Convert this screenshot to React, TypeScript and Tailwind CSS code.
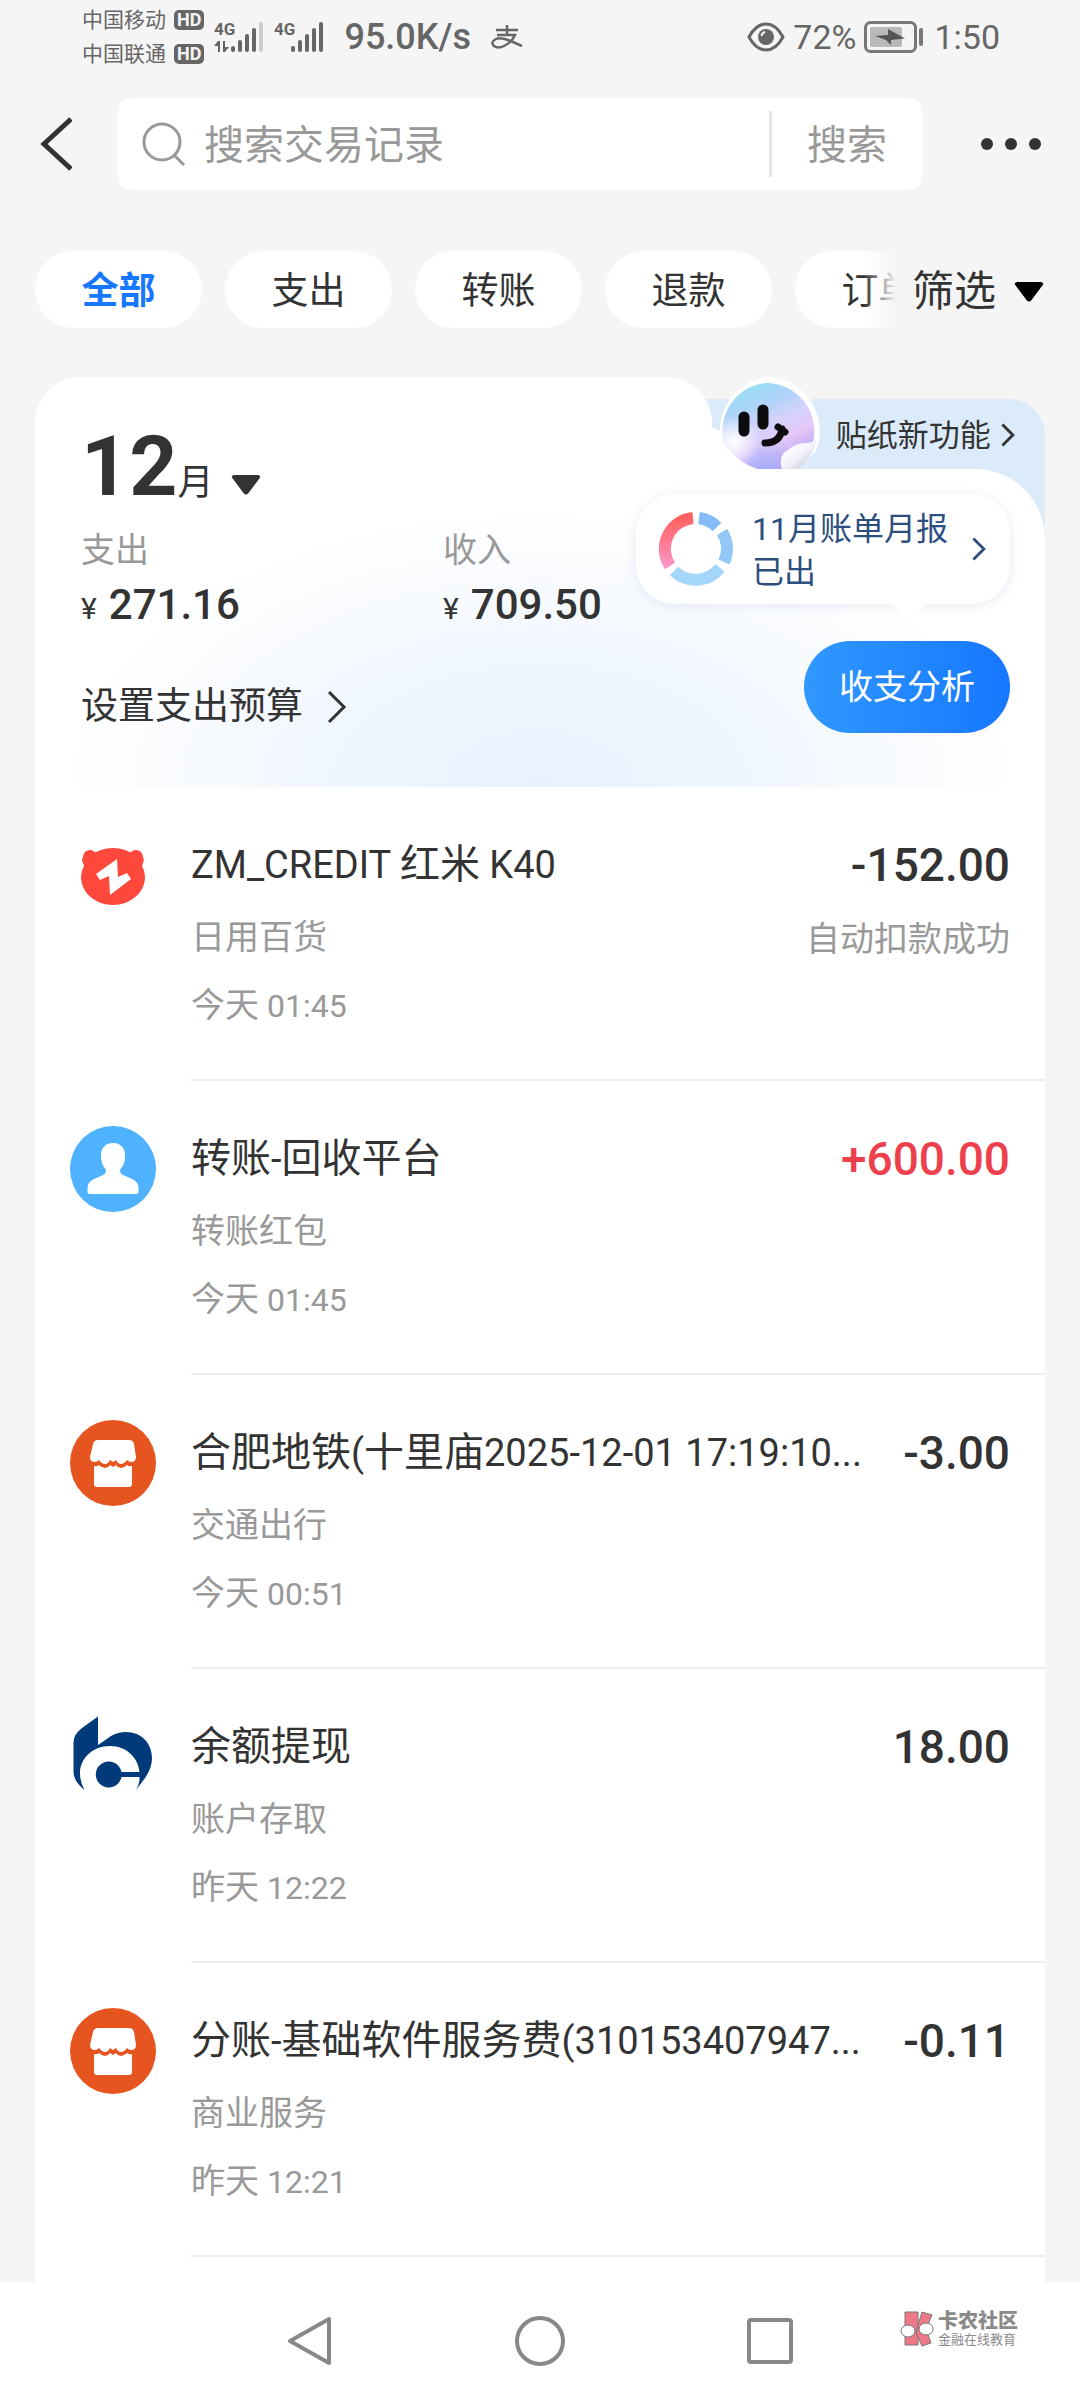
import { useState } from "react";
import type { ReactNode } from "react";

interface Bill {
  id: number;
  icon: ReactNode;
  title: string;
  category: string;
  time: string;
  amount: string;
  income?: boolean;
  note?: string;
}

function CreditIcon() {
  return (
    <svg viewBox="0 0 86 86" className="size-[86px] shrink-0">
      <g fill="#ff483c">
        <circle cx="20" cy="25" r="7" />
        <circle cx="66" cy="25" r="7" />
        <path d="M12 28Q13 22 20 24Q30 16 43 16Q56 16 66 24Q73 22 74 28L72 34Q75 39 75 45C75 61 60 73 43 73C26 73 11 61 11 45Q11 39 14 34Z" />
      </g>
      <path
        d="M26 42L47 27L48 45L57 41L61 47L40 63L39 44L30 48Z"
        fill="#fff"
      />
    </svg>
  );
}

function PersonIcon() {
  return (
    <svg viewBox="0 0 86 86" className="size-[86px] shrink-0">
      <circle cx="43" cy="43" r="43" fill="#4eb2ff" />
      <path
        d="M43 17C50 17 55 21.500 55 29C55 37 53 40 50.500 43Q49 47 53 49L62 53Q68.500 56 68.500 62V66Q68.500 68 66 68H20Q17.500 68 17.500 66V62Q17.500 56 24 53L33 49Q37 47 35.500 43C33 40 31 37 31 29C31 21.500 36 17 43 17Z"
        fill="#fff"
      />
    </svg>
  );
}

function ShopIcon() {
  return (
    <svg viewBox="0 0 86 86" className="size-[86px] shrink-0">
      <circle cx="43" cy="43" r="43" fill="#e6551f" />
      <path
        d="M28 20H59Q63 20 64 24L66 37Q66 42 61 42Q59 42 57 40Q54 44 51 44Q48 44 46 40L43 42L40 40Q38 44 35 44Q32 44 29 40Q27 42 25 42Q20 42 20 37L23 24Q24 20 28 20Z"
        fill="#fff"
      />
      <path
        d="M24 46Q27 47 29 45Q32 48 35 48Q38 48 40 45L43 47L46 45Q48 48 51 48Q54 48 57 45Q59 47 62 46V64Q62 67 59 67H27Q24 67 24 64Z"
        fill="#fff"
      />
    </svg>
  );
}

function BankIcon() {
  return (
    <svg viewBox="0 0 86 86" className="size-[86px] shrink-0">
      <path
        d="M28 2.500V31L41 22Q48 18 56 18C72 18 82 30 82 44Q82 54 75 64L66 76Q70 69 69.500 63H51.500A13 13 0 1 1 51.500 58H69.500C68 43 56 32 40 32C22 32 10 45 10 59Q10 68 14.500 76Q3.500 67 3.500 58V28Q4 20 12 14Z"
        fill="#003a7a"
      />
    </svg>
  );
}

const bills: Bill[] = [
  {
    id: 1,
    icon: <CreditIcon />,
    title: "ZM_CREDIT 红米 K40",
    category: "日用百货",
    time: "今天 01:45",
    amount: "-152.00",
    note: "自动扣款成功",
  },
  {
    id: 2,
    icon: <PersonIcon />,
    title: "转账-回收平台",
    category: "转账红包",
    time: "今天 01:45",
    amount: "+600.00",
    income: true,
  },
  {
    id: 3,
    icon: <ShopIcon />,
    title: "合肥地铁(十里庙2025-12-01 17:19:10...",
    category: "交通出行",
    time: "今天 00:51",
    amount: "-3.00",
  },
  {
    id: 4,
    icon: <BankIcon />,
    title: "余额提现",
    category: "账户存取",
    time: "昨天 12:22",
    amount: "18.00",
  },
  {
    id: 5,
    icon: <ShopIcon />,
    title: "分账-基础软件服务费(310153407947...",
    category: "商业服务",
    time: "昨天 12:21",
    amount: "-0.11",
  },
];

const tabs = ["全部", "支出", "转账", "退款", "订单"];

// Latin runs are set a little smaller than the Chinese around them
function Mixed({ text, latin }: { text: string; latin: string }) {
  return (
    <>
      {text.split(/([\x20-\x7e]+)/).map((part, i) =>
        i % 2 ? (
          <span key={i} className={latin}>
            {part}
          </span>
        ) : (
          part
        ),
      )}
    </>
  );
}

function Chevron({ className }: { className: string }) {
  return (
    <svg
      viewBox="0 0 20 34"
      className={className}
      fill="none"
      stroke="currentColor"
    >
      <path d="M2 2L17 17L2 32" />
    </svg>
  );
}

function Triangle({ className }: { className?: string }) {
  return (
    <svg viewBox="0 0 30 20" className={`h-5 w-[30px] ${className ?? ""}`}>
      <path
        d="M3 0H27Q31 1 28 4L17.500 18Q15 21 12.500 18L2 4Q-1 1 3 0Z"
        fill="currentColor"
      />
    </svg>
  );
}

function Carrier({ name }: { name: string }) {
  return (
    <div className="flex items-center gap-2">
      <span className="text-[21px] leading-[34px]">{name}</span>
      <span className="rounded-[5px] bg-[#666] px-[3px] text-[18px] leading-[20px] font-bold text-[#f5f5f5]">
        HD
      </span>
    </div>
  );
}

function Signal({ data, full }: { data?: boolean; full?: boolean }) {
  return (
    <svg viewBox="0 0 52 34" className="h-[34px] w-[52px]" fill="#666">
      <text x="0" y="15" fontSize="17" fontWeight="700">
        4G
      </text>
      {data && (
        <>
          <path d="M0 26L4 21H6V32H4V26Z" />
          <path d="M9 21H11V27H15L11 32H9Z" />
        </>
      )}
      <rect x="17" y="26" width="4" height="6" rx="2" />
      <rect x="24" y="20" width="4" height="12" rx="2" />
      <rect x="31" y="14" width="4" height="18" rx="2" />
      <rect x="38" y="8" width="4" height="24" rx="2" />
      <rect
        x="45"
        y="2"
        width="4"
        height="30"
        rx="2"
        fill={full ? "#666" : "#ccc"}
      />
    </svg>
  );
}

function StatusBar() {
  return (
    <div className="flex h-[74px] items-center pr-20 pl-[82px] text-[#666]">
      <div>
        <Carrier name="中国移动" />
        <Carrier name="中国联通" />
      </div>
      <div className="ml-2.5 flex items-center gap-2">
        <Signal data />
        <Signal full />
      </div>
      <span className="ml-[18px] text-[36px] leading-[40px] font-medium">
        95.0K/s
      </span>
      <svg
        viewBox="0 0 32 24"
        className="ml-5 h-6 w-8"
        fill="none"
        stroke="#666"
        strokeWidth="2.500"
      >
        <path d="M5 5H27M16 0V10M6 10H24Q21 17 13 21Q7 24 3 21Q-1 17 5 14Q9 12 17 15L31 21" />
      </svg>
      <div className="ml-auto flex items-center">
        <svg viewBox="0 0 38 30" className="h-[30px] w-[38px]">
          <path
            d="M2 15Q9 2 19 2T36 15Q29 28 19 28T2 15Z"
            fill="none"
            stroke="#666"
            strokeWidth="3"
          />
          <circle cx="19" cy="15" r="8" fill="#666" />
          <path
            d="M14.500 14Q15 10.500 18 10"
            fill="none"
            stroke="#f5f5f5"
            strokeWidth="2"
          />
        </svg>
        <span className="ml-2 text-[34px] leading-[40px]">72%</span>
        <svg viewBox="0 0 60 34" className="ml-2 h-[34px] w-[60px]">
          <rect
            x="1.500"
            y="2.500"
            width="50"
            height="29"
            rx="5"
            fill="none"
            stroke="#777"
            strokeWidth="3"
          />
          <rect x="6" y="7" width="32" height="20" rx="2" fill="#b9b9b9" />
          <path d="M11 16L24 15V9L41 18.500L27 20V25L22 20Z" fill="#555" />
          <rect x="55" y="8" width="4" height="18" rx="2" fill="#777" />
        </svg>
        <span className="ml-2.5 text-[34px] leading-[40px]">1:50</span>
      </div>
    </div>
  );
}

function SearchHeader() {
  const [keyword, setKeyword] = useState("");

  return (
    <header className="mt-6 flex h-[92px] items-center pr-9 pl-10">
      <button type="button" aria-label="返回">
        <svg
          viewBox="0 0 32 54"
          className="h-[54px] w-8"
          fill="none"
          stroke="#333"
          strokeWidth="5"
        >
          <path d="M31 2L4 27L31 52" />
        </svg>
      </button>
      <form
        className="ml-[46px] flex h-full flex-1 items-center rounded-[14px] bg-white pl-6"
        onSubmit={(e) => e.preventDefault()}
      >
        <svg
          viewBox="0 0 44 44"
          className="size-11 shrink-0"
          fill="none"
          stroke="#999"
          strokeWidth="3"
        >
          <circle cx="20" cy="20" r="18" />
          <path d="M32 33L42 43" />
        </svg>
        <input
          type="text"
          aria-label="搜索交易记录"
          placeholder="搜索交易记录"
          value={keyword}
          onChange={(e) => setKeyword(e.target.value)}
          className="ml-[18px] min-w-0 flex-1 pt-1 text-[40px] leading-[60px] outline-0 placeholder:text-[#999]"
        />
        <button
          type="submit"
          className="h-[66px] border-l-3 border-[#e5e5e5] px-[35px] pt-1 text-[40px] leading-[60px] text-[#999]"
        >
          搜索
        </button>
      </form>
      <button type="button" aria-label="更多" className="ml-14">
        <svg viewBox="0 0 66 14" className="h-[14px] w-[66px]" fill="#333">
          <circle cx="9" cy="7" r="6" />
          <circle cx="33" cy="7" r="6" />
          <circle cx="57" cy="7" r="6" />
        </svg>
      </button>
    </header>
  );
}

function FilterTabs() {
  const [active, setActive] = useState("全部");

  return (
    <nav className="mt-[61px] flex items-center pr-9 pl-[35px]">
      <div className="relative min-w-0 flex-1 overflow-hidden">
        <div className="flex gap-[23px]">
          {tabs.map((tab) => (
            <button
              key={tab}
              type="button"
              onClick={() => setActive(tab)}
              className={`h-[77px] w-[167px] shrink-0 rounded-full bg-white pt-1 text-[37px] leading-[56px] ${
                tab === active ? "font-bold text-[#1677ff]" : "text-[#333]"
              }`}
            >
              {tab}
            </button>
          ))}
        </div>
        <div className="absolute inset-y-0 right-0 w-8 bg-linear-to-r from-transparent to-[#f5f5f5]" />
      </div>
      <button
        type="button"
        className="ml-4 flex items-center gap-[18px] pt-1 text-[42px] leading-[56px] text-[#333]"
      >
        筛选
        <Triangle className="text-black" />
      </button>
    </nav>
  );
}

function Sticker() {
  return (
    <svg viewBox="0 0 110 92" className="h-[92px] w-[110px] shrink-0">
      <defs>
        <linearGradient id="face" x1="0.200" y1="0" x2="0.700" y2="1">
          <stop offset="0" stopColor="#93e2ee" />
          <stop offset="0.300" stopColor="#b0d3fb" />
          <stop offset="0.500" stopColor="#d5d2fb" />
          <stop offset="0.700" stopColor="#e3c8f8" />
          <stop offset="1" stopColor="#b79cf5" />
        </linearGradient>
        <radialGradient id="shine" cx="0.120" cy="0.680" r="0.300">
          <stop offset="0" stopColor="#fff" />
          <stop offset="1" stopColor="#fff" stopOpacity="0" />
        </radialGradient>
        <radialGradient id="violet" cx="0.450" cy="1" r="0.350">
          <stop offset="0" stopColor="#a4b2fb" />
          <stop offset="1" stopColor="#a4b2fb" stopOpacity="0" />
        </radialGradient>
        <linearGradient id="fold" x1="0.200" y1="0.200" x2="0.800" y2="0.800">
          <stop offset="0" stopColor="#fff" />
          <stop offset="0.600" stopColor="#f1f0f8" />
          <stop offset="1" stopColor="#cfcfdd" />
        </linearGradient>
      </defs>
      <path d="M0 50L20 60L50 92H0Z" fill="#fff" />
      <path
        d="M54 0A54 54 0 0 1 104 74Q94 84 86 92H24A54 54 0 0 1 54 0Z"
        fill="#fff"
      />
      <path
        d="M54 6A48 48 0 0 1 101 65L74 92H46Q26 86 12 66A48 48 0 0 1 54 6Z"
        fill="url(#face)"
      />
      <path
        d="M54 6A48 48 0 0 1 101 65L74 92H46Q26 86 12 66A48 48 0 0 1 54 6Z"
        fill="url(#violet)"
      />
      <path
        d="M54 6A48 48 0 0 1 101 65L74 92H46Q26 86 12 66A48 48 0 0 1 54 6Z"
        fill="url(#shine)"
      />
      <path
        d="M70 92Q66 78 76 73Q84 66 93 66Q101 66 105 62Q101 80 86 92Z"
        fill="url(#fold)"
      />
      <g fill="none" stroke="#0c0c0f" strokeLinecap="round">
        <path d="M32 40V54M51 33V47" strokeWidth="11" />
        <path d="M53 66Q68 66 70 52M66 50L73 55" strokeWidth="7" />
      </g>
    </svg>
  );
}

function Donut() {
  return (
    <svg
      viewBox="0 0 76 76"
      className="size-[76px] shrink-0"
      fill="none"
      strokeWidth="12"
    >
      <defs>
        <linearGradient id="red" x1="0" y1="0" x2="0" y2="1">
          <stop offset="0" stopColor="#ff6262" />
          <stop offset="1" stopColor="#fb94c4" />
        </linearGradient>
      </defs>
      <path d="M35 7A31 31 0 0 0 12 55" stroke="url(#red)" />
      <path d="M41 7A31 31 0 0 1 59 16" stroke="#86bbfa" />
      <path d="M64 21A31 31 0 0 1 66 51" stroke="#92c7f8" />
      <path d="M62 57A31 31 0 0 1 16 60" stroke="#a3d6fa" />
    </svg>
  );
}

function Money({ label, value }: { label: string; value: string }) {
  return (
    <div>
      <p className="text-[34px] leading-[54px] text-[#999]">{label}</p>
      <p className="flex items-baseline gap-3 leading-[56px] text-[#333]">
        <span className="text-[30px]">¥</span>
        <span className="text-[42px] font-medium">{value}</span>
      </p>
    </div>
  );
}

function Summary() {
  return (
    <section>
      <div className="flex h-[92px] items-end">
        <div className="z-10 h-full w-[67%] rounded-t-[46px] bg-white" />
        <a
          href="#sticker"
          className="-ml-10 flex h-[70px] flex-1 items-end rounded-tr-[36px] bg-[#dcebfa] pl-10 text-[31px] leading-[66px] text-[#333]"
        >
          <Sticker />
          <span className="ml-3.5">贴纸新功能</span>
          <Chevron className="mb-[22px] ml-2.5 h-6 w-3.5 stroke-4" />
        </a>
      </div>
      <div className="bg-[#dcebfa]">
        <div className="flex h-[318px] justify-between rounded-tr-[70px] bg-white bg-[radial-gradient(ellipse_48%_88%_at_50%_100%,#e8f1fd_0%,#eff6ff_40%,#f7fafe_68%,#ffffff_100%)] pr-[35px] pl-[46px]">
          <div className="flex-1">
            <button
              type="button"
              className="relative z-10 -mt-[46px] flex items-baseline text-[#333]"
            >
              <span className="text-[84px] leading-[88px] font-bold">12</span>
              <span className="text-[36px] leading-[36px]">月</span>
              <Triangle className="ml-[18px]" />
            </button>
            <div className="mt-3 grid grid-cols-[362px_1fr]">
              <Money label="支出" value="271.16" />
              <Money label="收入" value="709.50" />
            </div>
            <button
              type="button"
              className="mt-10 flex items-center gap-6 text-[37px] leading-[60px] text-[#333]"
            >
              设置支出预算
              <Chevron className="h-[34px] w-5 stroke-3" />
            </button>
          </div>
          <div className="flex flex-col items-end pt-[25px]">
            <button
              type="button"
              className="relative flex h-[110px] w-[374px] items-center rounded-[38px] bg-white pl-[22px] text-left text-[#2d4f80] shadow-[0_2px_12px_rgba(60,90,150,0.12)]"
            >
              <Donut />
              <span className="ml-[18px] w-[200px] pt-1 text-[32px] leading-[43px]">
                11月账单月报已出
              </span>
              <Chevron className="ml-5 h-6 w-3.5 stroke-4" />
              <svg
                viewBox="0 0 36 12"
                className="absolute top-full right-[83px] h-3 w-9"
              >
                <path d="M0 0Q6 2 12 9Q18 14 24 9Q30 2 36 0Z" fill="#fff" />
              </svg>
            </button>
            <button
              type="button"
              className="mt-[37px] h-[92px] rounded-full bg-linear-to-r from-[#3098ff] to-[#1677ff] px-[35px] text-[34px] text-white"
            >
              收支分析
            </button>
          </div>
        </div>
      </div>
    </section>
  );
}

function BillRow({ bill }: { bill: Bill }) {
  return (
    <li className="flex h-[294px] gap-[35px] pl-[35px]">
      <div className="pt-[45px]">{bill.icon}</div>
      <div className="flex min-w-0 flex-1 justify-between border-b-2 border-[#eee] pt-12 pr-[35px] whitespace-nowrap">
        <div>
          <h2 className="text-[40px] leading-[60px] text-[#333]">
            <Mixed text={bill.title} latin="text-[38px]" />
          </h2>
          <div className="mt-2 text-[34px] leading-[68px] text-[#999]">
            <p>{bill.category}</p>
            <p>
              <Mixed text={bill.time} latin="text-[32px]" />
            </p>
          </div>
        </div>
        <div className="text-right">
          <p
            className={`text-[46px] leading-[60px] font-medium ${
              bill.income ? "text-[#ee3f4d]" : "text-[#333]"
            }`}
          >
            {bill.amount}
          </p>
          {bill.note && (
            <p className="mt-2.5 text-[34px] leading-[68px] text-[#999]">
              {bill.note}
            </p>
          )}
        </div>
      </div>
    </li>
  );
}

function Watermark() {
  return (
    <div className="absolute top-[28px] right-[62px] flex items-center gap-1 text-[#8a8a8a]">
      <svg viewBox="0 0 34 36" className="h-9 w-[34px]">
        <g fill="#ee7886" stroke="#777" strokeWidth="1">
          <path d="M5 1H18V34H5Z" />
          <path d="M18 14L22 1L32 4L26 18L31 32L22 35L16 22Z" />
        </g>
        <g fill="#fff" stroke="#777" strokeWidth="1">
          <ellipse cx="8" cy="20" rx="7" ry="6" />
          <ellipse cx="26" cy="18" rx="7" ry="6" />
        </g>
      </svg>
      <div>
        <p className="text-[20px] leading-[22px] font-black">卡农社区</p>
        <p className="text-[13px] leading-[16px]">金融在线教育</p>
      </div>
    </div>
  );
}

function SystemNav() {
  return (
    <footer className="relative mt-auto flex h-[118px] items-center justify-center gap-[180px] bg-white">
      <button type="button" aria-label="后退">
        <svg
          viewBox="0 0 50 50"
          className="size-[50px]"
          fill="none"
          stroke="#888"
          strokeWidth="4"
          strokeLinejoin="round"
        >
          <path d="M44 3V47L5 25Z" />
        </svg>
      </button>
      <button type="button" aria-label="主屏幕">
        <svg
          viewBox="0 0 50 50"
          className="size-[50px]"
          fill="none"
          stroke="#888"
          strokeWidth="4"
        >
          <circle cx="25" cy="25" r="23" />
        </svg>
      </button>
      <button type="button" aria-label="最近任务">
        <svg
          viewBox="0 0 50 50"
          className="size-[50px]"
          fill="none"
          stroke="#888"
          strokeWidth="4"
        >
          <rect x="4" y="4" width="42" height="42" rx="2" />
        </svg>
      </button>
      <Watermark />
    </footer>
  );
}

export default function App() {
  return (
    <div
      lang="zh-CN"
      className="flex min-h-screen flex-col bg-[#f5f5f5] font-[Roboto,'Noto_Sans_CJK_SC',sans-serif]"
    >
      <StatusBar />
      <SearchHeader />
      <FilterTabs />
      <main className="mx-[35px] mt-[49px] flex-1">
        <Summary />
        <ul className="bg-white pb-[25px]">
          {bills.map((bill) => (
            <BillRow key={bill.id} bill={bill} />
          ))}
        </ul>
      </main>
      <SystemNav />
    </div>
  );
}
